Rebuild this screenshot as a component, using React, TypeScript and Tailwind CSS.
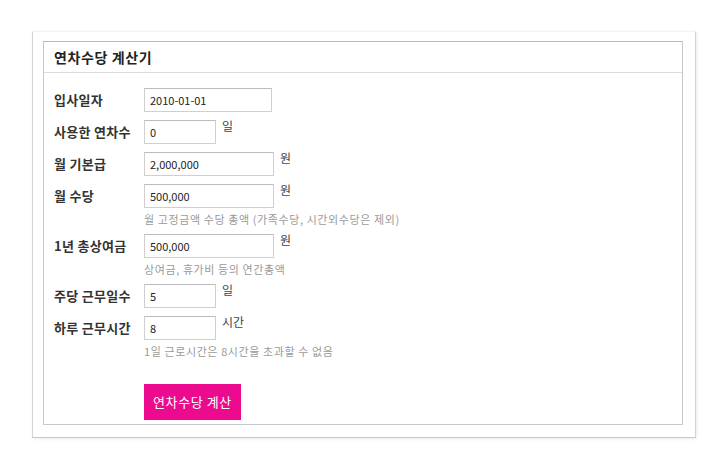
const rows: { label: string; value: string; width: string; unit?: string; help?: string }[] = [
  { label: "입사일자", value: "2010-01-01", width: "w-[128px]" },
  { label: "사용한 연차수", value: "0", width: "w-[72px]", unit: "일" },
  { label: "월 기본급", value: "2,000,000", width: "w-[130px]", unit: "원" },
  { label: "월 수당", value: "500,000", width: "w-[130px]", unit: "원", help: "월 고정금액 수당 총액 (가족수당, 시간외수당은 제외)" },
  { label: "1년 총상여금", value: "500,000", width: "w-[130px]", unit: "원", help: "상여금, 휴가비 등의 연간총액" },
  { label: "주당 근무일수", value: "5", width: "w-[72px]", unit: "일" },
  { label: "하루 근무시간", value: "8", width: "w-[72px]", unit: "시간", help: "1일 근로시간은 8시간을 초과할 수 없음" },
];

export default function App() {
  return (
    <div
      className="w-[726px] h-[467px] bg-white pt-[31px] pl-[32px]"
      style={{ fontFamily: '"Noto Sans CJK KR", "Noto Sans", sans-serif' }}
    >
      <div className="w-[664px] h-[407px] border-x border-b border-t border-x-[#d4d4d4] border-b-[#c8c8c8] border-t-[#f4f4f4] shadow-[1px_1px_3px_rgba(0,0,0,0.08)] pt-[9px] pl-[10px]">
        <div className="w-[640px] h-[384px] border border-[#c9c9c9] border-t-[#b8b8b8] flex flex-col">
          <div className="h-[31px] border-b border-[#dcdcdc] flex items-center pl-[10px]">
            <span className="text-[14px] font-bold text-[#222] tracking-[0.6px]">연차수당 계산기</span>
          </div>
          <div className="pl-[10px] pt-[15px] flex flex-col">
            {rows.map((r) => (
              <div key={r.label} className="flex flex-col mb-[8px]">
                <div className="flex items-start">
                  <div className="w-[90px] h-[24px] flex items-center text-[13px] font-bold text-[#333] tracking-[0.3px]">
                    {r.label}
                  </div>
                  <div
                    className={`${r.width} h-[24px] border border-[#cfcfcf] border-t-[#bdbdbd] flex items-center px-[5px] text-[11px] text-[#222]`}
                  >
                    {r.value}
                  </div>
                  {r.unit && (
                    <span className="ml-[6px] text-[12px] leading-[14px] text-[#444] mt-[-1px]">{r.unit}</span>
                  )}
                </div>
                {r.help && (
                  <div className="ml-[90px] mt-[5px] text-[11px] leading-[13px] text-[#9a9a9a] tracking-[0.6px]">{r.help}</div>
                )}
              </div>
            ))}
            <div className="ml-[90px] mt-[18px]">
              <button className="w-[97px] h-[36px] bg-[#ec0a8e] text-white text-[13px] tracking-[0.6px]">
                연차수당 계산
              </button>
            </div>
          </div>
        </div>
      </div>
    </div>
  );
}
